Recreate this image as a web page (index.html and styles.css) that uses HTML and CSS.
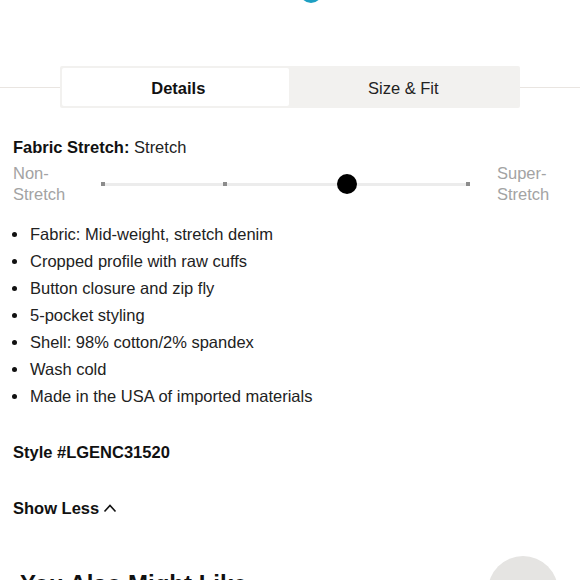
FILE: index.html
```html
<!DOCTYPE html>
<html>
<head>
<meta charset="utf-8">
<link rel="stylesheet" href="styles.css">
</head>
<body>
<div class="page">
  <div class="logo-area"><div class="logo-dot"></div></div>
  <div class="tabs-row">
    <div class="rule"></div>
    <div class="tabs">
      <div class="tab active">Details</div>
      <div class="tab">Size &amp; Fit</div>
    </div>
    <div class="rule"></div>
  </div>
  <div class="content">
    <div class="stretch-title"><b>Fabric Stretch:</b> Stretch</div>
    <div class="slider-row">
      <div class="slider-label">Non-<br>Stretch</div>
      <div class="track">
        <span class="stop"></span>
        <span class="stop"></span>
        <span class="stop hidden"></span>
        <span class="stop"></span>
        <span class="knob"></span>
      </div>
      <div class="slider-label right">Super-<br>Stretch</div>
    </div>
    <ul class="features">
      <li>Fabric: Mid-weight, stretch denim</li>
      <li>Cropped profile with raw cuffs</li>
      <li>Button closure and zip fly</li>
      <li>5-pocket styling</li>
      <li>Shell: 98% cotton/2% spandex</li>
      <li>Wash cold</li>
      <li>Made in the USA of imported materials</li>
    </ul>
    <div class="style-no">Style #LGENC31520</div>
    <div class="show-less">Show Less <svg class="chev" width="14" height="10" viewBox="0 0 14 10"><path d="M1.5 8.5 L7 2.5 L12.5 8.5" fill="none" stroke="#111" stroke-width="1.6"/></svg></div>
    <div class="might-like">
      <h2>You Also Might Like</h2>
      <div class="circle-btn"></div>
    </div>
  </div>
</div>
</body>
</html>
```
FILE: styles.css
```css
html, body { margin: 0; padding: 0; background: #fff; }
body { font-family: "Liberation Sans", Arial, sans-serif; color: #1a1a1a; overflow: hidden; }
.page { width: 580px; height: 580px; overflow: hidden; }
.logo-area { height: 66px; display: flex; justify-content: center; }
.logo-dot { width: 22px; height: 22px; border-radius: 50%; background: #1d9fc2; margin-top: -19px; margin-left: 42px; }
.tabs-row { display: flex; align-items: center; }
.rule { flex: 1; height: 1px; background: #e9e5e1; }
.tabs { width: 460px; height: 42px; box-sizing: border-box; padding: 2px; background: #f2f1ef; border-radius: 2px; display: flex; }
.tab { flex: 1; display: flex; align-items: center; justify-content: center; padding-top: 3px; font-size: 16.5px; color: #222; }
.tab.active { background: #fff; font-weight: bold; color: #111; border-radius: 2px; padding-left: 6px; }
.tab:last-child { flex: 1.04; }
.content { padding-left: 13px; padding-right: 13px; }
.stretch-title { margin-top: 29px; font-size: 16.5px; line-height: 20px; color: #222; }
.stretch-title b { color: #111; }
.slider-row { display: flex; align-items: center; margin-top: 6px; }
.slider-label { width: 88px; font-size: 16.5px; line-height: 21px; color: #a3a3a3; }
.slider-label.right { width: auto; margin-left: 27px; }
.track { position: relative; width: 369px; height: 3px; background: #ececec; display: flex; justify-content: space-between; align-items: center; }
.stop { width: 4px; height: 4px; background: #8c8c8c; }
.stop.hidden { visibility: hidden; }
.knob { position: absolute; left: 236px; top: -9px; width: 20px; height: 20px; border-radius: 50%; background: #000; }
.features { list-style: none; margin: 16px 0 0 0; padding: 0; }
.features li { position: relative; padding-left: 17px; font-size: 16.5px; line-height: 27px; color: #222; }
.features li::before { content: ""; position: absolute; left: -1px; top: 11px; width: 5px; height: 5px; border-radius: 50%; background: #111; }
.style-no { margin-top: 32px; font-size: 16.5px; font-weight: bold; line-height: 20px; color: #111; }
.show-less { margin-top: 36px; font-size: 16.5px; font-weight: bold; line-height: 20px; color: #111; display: flex; align-items: center; gap: 4px; }
.might-like { display: flex; justify-content: space-between; align-items: flex-start; margin-top: 29px; }
.might-like h2 { margin: 0 0 0 7px; margin-top: 23px; font-size: 24px; font-weight: bold; color: #111; line-height: 28px; }
.circle-btn { width: 70px; height: 70px; border-radius: 50%; background: #e5e4e2; margin-top: 9px; margin-right: 9px; }
```
